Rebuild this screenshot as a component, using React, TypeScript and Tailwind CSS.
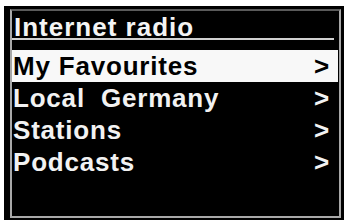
import React from 'react';

interface MenuItem {
  label: string;
  selected?: boolean;
}

const items: MenuItem[] = [
  { label: 'My Favourites', selected: true },
  { label: 'Local\u00a0 Germany' },
  { label: 'Stations' },
  { label: 'Podcasts' },
];

const MenuRow: React.FC<{ item: MenuItem }> = ({ item }) => (
  <div
    className={`h-[32px] flex items-center justify-between pl-[1px] pr-[8px] mr-[1px] leading-[32px] ${
      item.selected ? 'bg-[#f8f8f8] text-black' : 'text-[#f2f2f2]'
    }`}
  >
    <span>{item.label}</span>
    <span>&gt;</span>
  </div>
);

const App: React.FC = () => {
  return (
    <div className="w-[348px] h-[223px] bg-white pt-[6px] pl-[4px]" style={{ fontFamily: '"Liberation Sans", Arial, sans-serif' }}>
      <div className="w-[340px] h-[214px] bg-black pt-[3px] pl-[6px] pr-[3px] pb-[2px]">
        <div className="h-full border-2 border-[#a8a8a8] border-t-[#5a5a5a] flex flex-col">
          <div className="mr-[5px] pt-[5px] border-b-2 border-[#d0d0d0]">
            <div className="pl-[2px] text-[26px] leading-[22px] font-bold tracking-[1px] text-[#f4f4f4]">
              Internet radio
            </div>
          </div>
          <div className="mt-[10px] text-[26px] font-bold tracking-[0.8px]">
            {items.map(item => (
              <MenuRow key={item.label} item={item} />
            ))}
          </div>
        </div>
      </div>
    </div>
  );
};

export default App;
